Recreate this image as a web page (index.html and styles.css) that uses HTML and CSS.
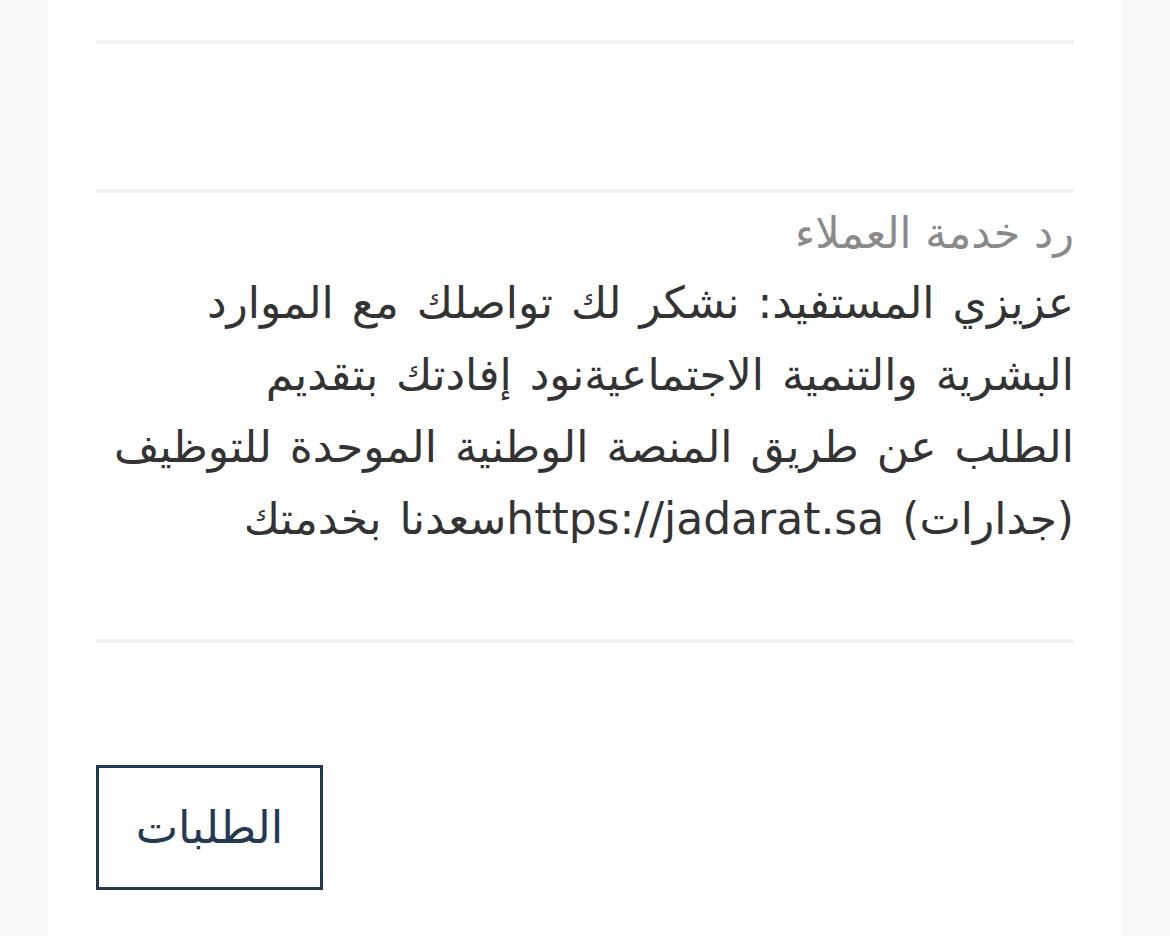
FILE: index.html
```html
<!DOCTYPE html>
<html lang="ar" dir="rtl">
<head>
<meta charset="UTF-8">
<meta name="viewport" content="width=device-width, initial-scale=1">
<title>الطلبات</title>
<link rel="stylesheet" href="styles.css">
</head>
<body>
<div class="page">
	<div class="card">
		<hr class="sep">
		<div class="empty-block"></div>
		<hr class="sep">
		<!-- رد خدمة العملاء -->
		<div class="reply">
			<h3 class="reply-title">رد خدمة العملاء</h3>
			<p class="reply-text">عزيزي المستفيد: نشكر لك تواصلك مع الموارد
			البشرية والتنمية الاجتماعيةنود إفادتك بتقديم
			الطلب عن طريق المنصة الوطنية الموحدة للتوظيف
			(جدارات) https://jadarat.saسعدنا بخدمتك</p>
		</div>
		<hr class="sep">
		<div class="actions">
			<a href="#" class="btn-outline">الطلبات</a>
		</div>
	</div>
</div>
</body>
</html>
```

FILE: styles.css
```css
*{
	margin:0;
	padding:0;
	box-sizing:border-box;
}
body{
	background:#f8f8f8;
	font-family:"DejaVu Sans","Noto Sans",sans-serif;
	color:#333;
	-webkit-font-smoothing:antialiased;
}
.page{
	padding:0 48px;
}
.card{
	background:#fff;
	padding:40px 48px 60px;
	min-height:936px;
}
.sep{
	border:0;
	height:4px;
	background:#f1f1f4;
}
.empty-block{
	height:145px;
}
/* 回复内容 */
.reply{
	padding:12px 0 84px;
}
.reply-title{
	font-size:43px;
	font-weight:400;
	color:#8a8a8a;
	line-height:56px;
}
.reply-text{
	font-size:44px;
	line-height:72px;
	color:#333;
	margin-top:6px;
	word-spacing:4px;
	white-space:pre-line; /* 保留原文换行 */
}
.actions{
	padding-top:122px;
	display:flex;
	justify-content:flex-end; /* 按钮靠左 */
}
.btn-outline{
	display:flex;
	align-items:center;
	justify-content:center;
	width:227px;
	height:125px;
	border:3px solid #243a52;
	color:#243a52;
	font-size:45px;
	text-decoration:none;
}
```
